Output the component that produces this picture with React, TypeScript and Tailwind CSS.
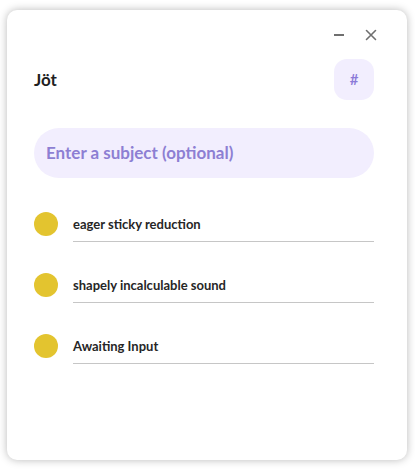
import React from "react";

const rows = ["eager sticky reduction", "shapely incalculable sound", "Awaiting Input"];

export default function App() {
  return (
    <div className="w-[415px] h-[469px] bg-white pl-[7px] pt-[10px]" style={{ fontFamily: "Lato, 'Noto Sans', sans-serif" }}>
      <div className="w-[400px] h-[450px] bg-white rounded-[10px] shadow-[0_0_8px_rgba(0,0,0,0.28)] flex flex-col pl-[27px] pr-[33px]">
        <div className="h-[49px] flex items-center justify-end">
          <svg width="12" height="12" viewBox="0 0 12 12" className="mr-[20px]">
            <line x1="1" y1="6" x2="11" y2="6" stroke="#6f6f6f" strokeWidth="2" />
          </svg>
          <svg width="12" height="12" viewBox="0 0 12 12" className="mr-[-3px]">
            <path d="M1.5 1.5 L10.5 10.5 M10.5 1.5 L1.5 10.5" stroke="#6f6f6f" strokeWidth="1.6" strokeLinecap="round" />
          </svg>
        </div>
        <div className="h-[41px] flex items-center justify-between">
          <span className="text-[17px] font-bold text-[#1f1f1f]">Jöt</span>
          <div className="w-[40px] h-[41px] rounded-[13px] bg-[#f2eefe] flex items-center justify-center text-[15px] font-semibold text-[#8b7ad8]">#</div>
        </div>
        <div className="mt-[28px] h-[50px] rounded-full bg-[#f2eefe] flex items-center pl-[12px]">
          <span className="text-[17px] font-bold text-[#8d7fd3]">Enter a subject (optional)</span>
        </div>
        <div className="mt-[29px] flex flex-col gap-[26px]">
          {rows.map((r) => (
            <div key={r} className="flex items-start">
              <div className="mt-[5px] w-[24px] h-[24px] rounded-full bg-[#e3c42f] shrink-0" />
              <div className="ml-[15px] flex-1 h-[35px] border-b border-[#c6c6c6] flex items-center pt-[1px]">
                <span className="text-[13px] font-bold text-[#262626]">{r}</span>
              </div>
            </div>
          ))}
        </div>
      </div>
    </div>
  );
}
